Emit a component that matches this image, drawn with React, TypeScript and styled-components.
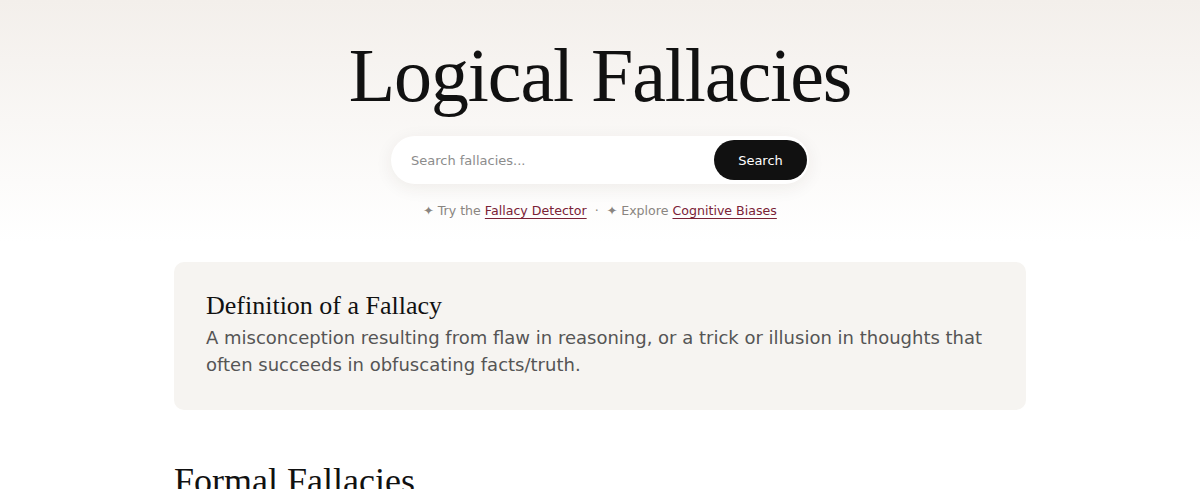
import styled, { createGlobalStyle } from "styled-components";

const GlobalStyle = createGlobalStyle`
    body {
        margin: 0;
        background: #ffffff;
        font-family: "DejaVu Sans", "Open Sans", sans-serif;
        color: #111111;
    }
`

export default function App() {
    return (
        <>
            <GlobalStyle />
            <Hero>
                <Title>Logical Fallacies</Title>
                <SearchForm onSubmit={(e) => e.preventDefault()}>
                    <SearchInput placeholder="Search fallacies..." />
                    <SearchButton type="submit">Search</SearchButton>
                </SearchForm>
                <Hints>
                    <span>✦ Try the </span>
                    <HintLink href="#">Fallacy Detector</HintLink>
                    <Dot>·</Dot>
                    <span>✦ Explore </span>
                    <HintLink href="#">Cognitive Biases</HintLink>
                </Hints>
            </Hero>
            <Main>
                <Card>
                    <CardTitle>Definition of a Fallacy</CardTitle>
                    <CardText>
                        A misconception resulting from flaw in reasoning, or a trick or illusion in thoughts that
                        often succeeds in obfuscating facts/truth.
                    </CardText>
                </Card>
                <SectionTitle>Formal Fallacies</SectionTitle>
            </Main>
        </>
    )
}

const Hero = styled.header`
    background: linear-gradient(180deg, #f3efeb 0%, #ffffff 100%);
    padding: 33px 0 22px;
    text-align: center;
`

const Title = styled.h1`
    font-family: "Liberation Serif", serif;
    font-weight: 400;
    font-size: 76px;
    line-height: 84px;
    letter-spacing: -1.1px;
    margin: 0 0 19px;
    color: #111111;
`

const SearchForm = styled.form`
    display: flex;
    align-items: center;
    width: 418px;
    height: 48px;
    box-sizing: border-box;
    margin: 0 auto;
    padding: 4px 2px 4px 18px;
    background: #ffffff;
    border-radius: 999px;
    box-shadow: 0 4px 18px rgba(60, 40, 20, 0.07);
`

const SearchInput = styled.input`
    flex: 1;
    border: none;
    outline: none;
    background: transparent;
    font-family: "DejaVu Sans", sans-serif;
    font-size: 13px;
    color: #333333;
    &::placeholder {
        color: #8c8c8c;
    }
`

const SearchButton = styled.button`
    width: 93px;
    height: 40px;
    border: none;
    border-radius: 999px;
    background: #111111;
    color: #ffffff;
    font-family: "DejaVu Sans", sans-serif;
    font-size: 13px;
    font-weight: 500;
    cursor: pointer;
`

const Hints = styled.p`
    margin: 18px 0 0;
    font-size: 12.6px;
    line-height: 18px;
    color: #8a8580;
`

const HintLink = styled.a`
    color: #7a2236;
    text-decoration: underline;
    text-underline-offset: 3px;
`

const Dot = styled.span`
    margin: 0 8px;
`

const Main = styled.main`
    width: 852px;
    margin: 20px auto 0;
`

const Card = styled.section`
    background: #f6f4f1;
    border-radius: 10px;
    padding: 28px 32px 32px;
`

const CardTitle = styled.h2`
    font-family: "Liberation Serif", serif;
    font-weight: 400;
    font-size: 26px;
    line-height: 32px;
    margin: 0 0 2px;
    color: #111111;
`

const CardText = styled.p`
    margin: 0;
    font-size: 18px;
    line-height: 27px;
    color: #555555;
`

const SectionTitle = styled.h2`
    font-family: "Liberation Serif", serif;
    font-weight: 400;
    font-size: 36px;
    line-height: 40px;
    margin: 51px 0 0;
    color: #111111;
`
